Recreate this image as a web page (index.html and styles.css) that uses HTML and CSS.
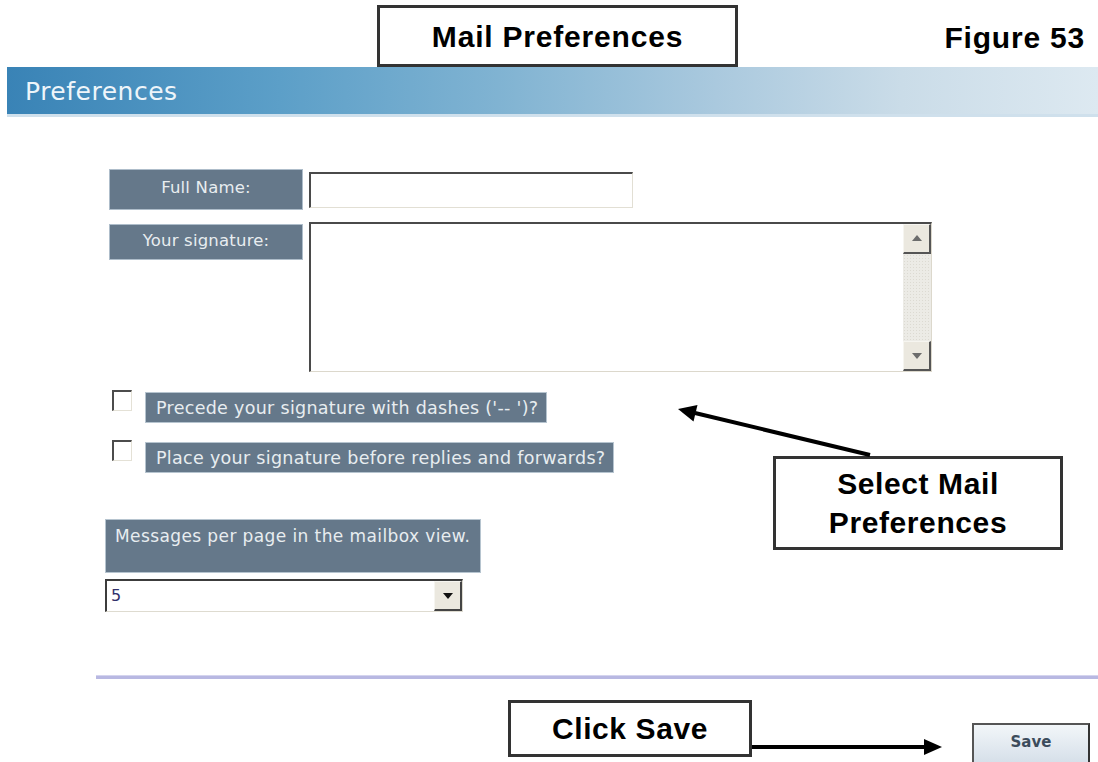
FILE: index.html
```html
<!DOCTYPE html>
<html lang="en">
<head>
<meta charset="UTF-8">
<meta name="viewport" content="width=device-width, initial-scale=1.0">
<title>Mail Preferences</title>
<link rel="stylesheet" href="styles.css">
</head>
<body>
<div class="page">
  <header class="doc-head">
    <div class="doc-title">Mail Preferences</div>
    <div class="fig-no">Figure 53</div>
  </header>

  <div class="banner">Preferences</div>

  <form class="prefs" id="prefs-form">
    <div class="row">
      <label class="tag" for="full-name">Full Name:</label>
      <input type="text" id="full-name" class="field">
    </div>

    <div class="row sig-row">
      <label class="tag" for="signature">Your signature:</label>
      <div class="sig-box">
        <textarea id="signature"></textarea>
        <div class="vscroll">
          <span class="sbtn up"></span>
          <span class="track"></span>
          <span class="sbtn down"></span>
        </div>
      </div>
    </div>

    <div class="check-row first">
      <span class="box"></span>
      <span class="check-label">Precede your signature with dashes ('-- ')?</span>
    </div>
    <div class="check-row">
      <span class="box"></span>
      <span class="check-label">Place your signature before replies and forwards?</span>
    </div>

    <div class="per-page">Messages per page in the mailbox view.</div>
    <div class="dropdown">
      <span class="drop-value">5</span>
      <span class="drop-btn"></span>
    </div>

    <div class="rule"></div>

    <div class="save-row">
      <button type="button" class="save">Save</button>
    </div>
  </form>

  <!-- annotation callouts drawn over the screenshot -->
  <div class="callout callout-select">Select Mail<br>Preferences</div>
  <div class="callout callout-save">Click Save</div>

  <svg class="arrows" width="1098" height="762" viewBox="0 0 1098 762">
    <line x1="870" y1="455" x2="695" y2="413" stroke="#000" stroke-width="4"/>
    <polygon points="678,409 697.5,405 693.5,421.5" fill="#000"/>
    <line x1="752" y1="747" x2="926" y2="747" stroke="#000" stroke-width="4"/>
    <polygon points="924,739 942,747 924,755" fill="#000"/>
  </svg>
</div>
</body>
</html>
```

FILE: styles.css
```css
body {
  margin: 0;
  background: #fff;
  font-family: "DejaVu Sans", Verdana, sans-serif;
}
.page {
  position: relative;
  width: 1098px;
  height: 762px;
  overflow: hidden;
}

/* document header */
.doc-head {
  display: flex;
  align-items: flex-start;
  height: 67px;
}
.doc-title {
  box-sizing: border-box;
  margin: 5px 0 0 377px;
  width: 361px;
  height: 62px;
  border: 3px solid #333;
  font: bold 30px "Liberation Sans", Arial, sans-serif;
  letter-spacing: 0.8px;
  text-align: center;
  line-height: 58px;
  color: #000;
}
.fig-no {
  margin: 21px 13px 0 auto;
  font: bold 30px "Liberation Sans", Arial, sans-serif;
  letter-spacing: 0.8px;
  color: #000;
}

/* blue title bar */
.banner {
  margin-left: 7px;
  height: 47px;
  padding-left: 18px;
  line-height: 50px;
  font-size: 25px;
  letter-spacing: 0.5px;
  color: #eef5fa;
  background: linear-gradient(to right, #3983b6 0%, #5c9fc8 25%, #80b3d2 45%, #aac9de 65%, #cadce8 82%, #dde9f1 100%);
  border-bottom: 3px solid #cfe0ec;
}

/* form */
.prefs {
  padding: 52px 0 0 109px;
}
.row {
  display: flex;
  align-items: center;
}
.sig-row {
  align-items: flex-start;
  margin-top: 12px;
}
.tag {
  box-sizing: border-box;
  width: 194px;
  height: 41px;
  background: #65788a;
  border: 1px solid #aebdca;
  color: #e8edf0;
  font-size: 16.5px;
  letter-spacing: 0.2px;
  text-align: center;
  line-height: 36px;
}
.sig-row .tag {
  margin-top: 2px;
  height: 36px;
  line-height: 32px;
}
.field {
  box-sizing: border-box;
  margin-left: 6px;
  width: 324px;
  height: 36px;
  border-style: solid;
  border-width: 2px 1px 1px 2px;
  border-color: #4a4a4a #e2dfd4 #e2dfd4 #4a4a4a;
  background: #fff;
}
.sig-box {
  box-sizing: border-box;
  display: flex;
  margin-left: 6px;
  width: 623px;
  height: 150px;
  border-style: solid;
  border-width: 2px 1px 1px 2px;
  border-color: #4a4a4a #dcd8cc #dcd8cc #4a4a4a;
  background: #fff;
}
.sig-box textarea {
  flex: 1;
  border: none;
  resize: none;
  outline: none;
  background: transparent;
}
.vscroll {
  display: flex;
  flex-direction: column;
  width: 28px;
}
.sbtn {
  position: relative;
  box-sizing: border-box;
  height: 30px;
  background: #ebe8df;
  border-style: solid;
  border-width: 1px 2px 2px 1px;
  border-color: #f6f5f0 #555 #555 #f6f5f0;
}
.sbtn::after {
  content: "";
  position: absolute;
  left: 8px;
  top: 10px;
  border-left: 5px solid transparent;
  border-right: 5px solid transparent;
}
.sbtn.up::after {
  border-bottom: 6px solid #6c6c6c;
}
.sbtn.down::after {
  top: 11px;
  border-top: 6px solid #6c6c6c;
}
.track {
  flex: 1;
  background-color: #ecebe6;
  background-image: radial-gradient(#dcdad2 0.6px, transparent 0.8px);
  background-size: 3px 3px;
}

/* checkboxes */
.check-row {
  display: flex;
  align-items: flex-start;
  margin-top: 17px;
}
.check-row.first {
  margin-top: 18px;
}
.box {
  box-sizing: border-box;
  margin-left: 3px;
  width: 20px;
  height: 21px;
  border-style: solid;
  border-width: 2px 1px 1px 2px;
  border-color: #4c4c4c #e4e1d6 #e4e1d6 #4c4c4c;
  background: #fff;
}
.check-label {
  margin: 2px 0 0 13px;
  padding: 0 8px 0 10px;
  height: 29px;
  line-height: 31px;
  background: #65788a;
  border: 1px solid #b6c4cf;
  color: #e8edf0;
  font-size: 17.5px;
  letter-spacing: 0.3px;
}

/* messages per page */
.per-page {
  box-sizing: border-box;
  margin: 46px 0 0 -4px;
  width: 376px;
  height: 54px;
  padding: 6px 0 0 9px;
  background: #65788a;
  border: 1px solid #b6c4cf;
  color: #e8edf0;
  font-size: 17px;
  letter-spacing: 0.4px;
  white-space: nowrap;
}
.dropdown {
  box-sizing: border-box;
  display: flex;
  margin: 6px 0 0 -4px;
  width: 358px;
  height: 33px;
  border-style: solid;
  border-width: 2px 1px 1px 2px;
  border-color: #3c3c3c #dedbd0 #dedbd0 #3c3c3c;
  background: #fff;
}
.drop-value {
  flex: 1;
  padding-left: 4px;
  line-height: 30px;
  font-size: 16px;
  color: #30306a;
}
.drop-btn {
  position: relative;
  box-sizing: border-box;
  width: 28px;
  background: #ebe8df;
  border-style: solid;
  border-width: 1px 2px 2px 1px;
  border-color: #f6f5f0 #444 #444 #f6f5f0;
}
.drop-btn::after {
  content: "";
  position: absolute;
  left: 8px;
  top: 11px;
  border-left: 5px solid transparent;
  border-right: 5px solid transparent;
  border-top: 6px solid #111;
}

.rule {
  margin: 63px 0 0 -13px;
  height: 3px;
  background: #b8b8e2;
  border-top: 1px solid #d4d4ee;
}

.save-row {
  display: flex;
  justify-content: flex-end;
  padding-right: 8px;
  margin-top: 44px;
}
.save {
  width: 118px;
  height: 44px;
  background: linear-gradient(#f2f6f9, #d4dee8);
  border-style: solid;
  border-width: 2px;
  border-color: #555 #333 #333 #555;
  color: #3c4c5c;
  font: bold 15px "DejaVu Sans", Verdana, sans-serif;
  padding: 0 0 6px 0;
}

/* callouts */
.callout {
  position: absolute;
  box-sizing: border-box;
  border: 3px solid #333;
  background: #fff;
  font: bold 30px "Liberation Sans", Arial, sans-serif;
  letter-spacing: 0.6px;
  text-align: center;
  color: #000;
}
.callout-select {
  left: 773px;
  top: 456px;
  width: 290px;
  height: 94px;
  padding-top: 5px;
  line-height: 39px;
}
.callout-save {
  left: 508px;
  top: 700px;
  width: 244px;
  height: 57px;
  line-height: 51px;
}
.arrows {
  position: absolute;
  left: 0;
  top: 0;
  pointer-events: none;
}
```
